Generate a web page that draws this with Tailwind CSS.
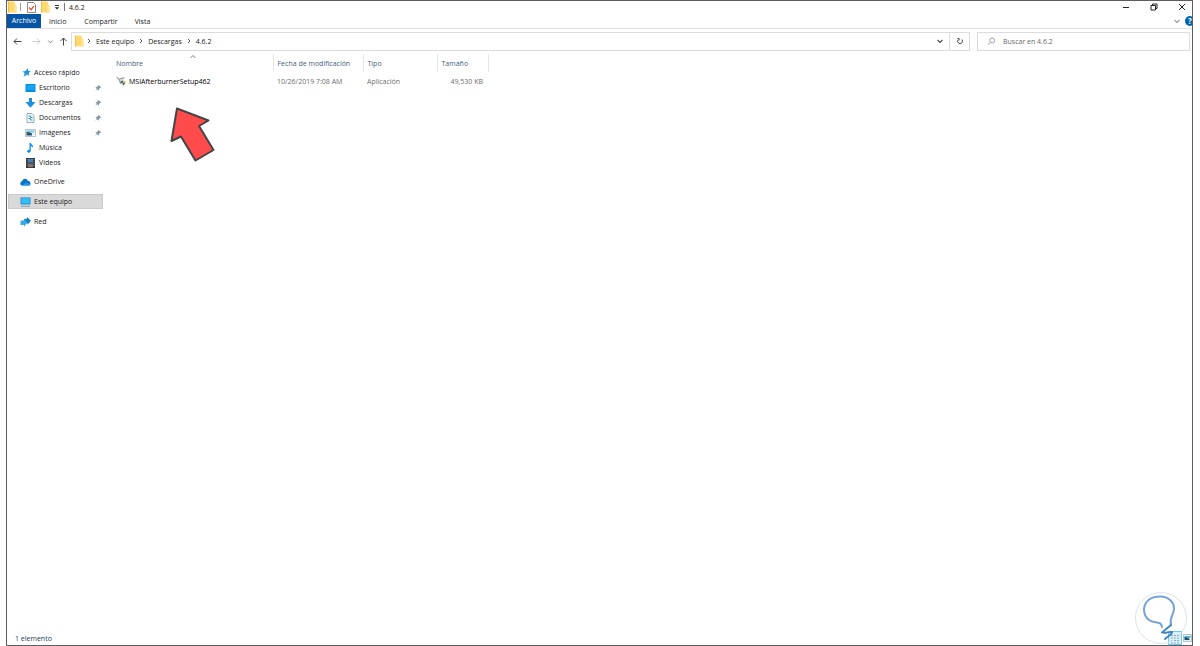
<!DOCTYPE html>
<html lang="es">
<head>
<meta charset="utf-8">
<title>4.6.2</title>
<script src="https://cdn.jsdelivr.net/npm/@tailwindcss/browser@4"></script>
</head>
<body class="bg-white">
<svg class="hidden" aria-hidden="true">
  <symbol id="folder" viewBox="0 0 10 12"><path d="M1 .5h6l1 1v2l1.500 1v7H1z" fill="#ffd96f"/><path d="M1 .5h1v11H1z" fill="#f2bd45"/><path d="M7 4.500h2.500v7H7z" fill="#ffe599"/></symbol>
  <symbol id="right" viewBox="0 0 6 6"><path d="M2 1l2 2-2 2" fill="none" stroke="#444" stroke-width=".9"/></symbol>
  <symbol id="down" viewBox="0 0 8 8"><path d="M1.500 3L4 5.500 6.500 3" fill="none" stroke="currentColor" stroke-width="1.100"/></symbol>
  <symbol id="pin" viewBox="0 0 8 8"><path d="M4.500.7L7.300 3.500l-1 .2L5 5l-.2 1.700L3.200 5.200.8 7.300 2.800 4.800 1.300 3.200 3 3l1.300-1.300z" fill="#8795a1"/></symbol>
</svg>
<div class="h-screen pl-[6px] pr-[7px]">
<div class="relative flex h-full flex-col overflow-hidden border border-[#5d5d61] bg-white font-['Open_Sans','Noto_Sans',sans-serif] text-[7px] leading-[15px] text-[#1a1a1a]">
  <header class="flex h-[13px] shrink-0 items-center pb-px">
    <svg class="h-3 w-[10px]"><use href="#folder"/></svg>
    <span class="ml-[3px] h-2 w-px bg-[#999]"></span>
    <button class="ml-[6px]" aria-label="Propiedades"><svg class="h-[11px] w-[9px]" viewBox="0 0 9 11"><path d="M.5.500h6l2 2v8h-8z" fill="#fff" stroke="#8b8b8b"/><path d="M2 5.500l2 2.300L7 4" fill="none" stroke="#e0522d" stroke-width="1.300"/></svg></button>
    <button class="ml-[4px]" aria-label="Nueva carpeta"><svg class="h-3 w-[10px]"><use href="#folder"/></svg></button>
    <button class="ml-[4px]" aria-label="Personalizar"><svg class="h-[6px] w-[6px]" viewBox="0 0 6 6"><path d="M1 1.500h4" stroke="#222" stroke-width=".9"/><path d="M.8 3.200h4.400L3 5.400z" fill="#222"/></svg></button>
    <span class="ml-[4px] h-2 w-px bg-[#777]"></span>
    <h1 class="ml-[4px] text-[7px]">4.6.2</h1>
    <div class="ml-auto mr-[6px] flex items-center gap-[20px]">
      <button aria-label="Minimizar"><svg class="h-2 w-2" viewBox="0 0 8 8"><path d="M1 4.500h6" stroke="#222"/></svg></button>
      <button aria-label="Restaurar"><svg class="h-2 w-2" viewBox="0 0 8 8"><path d="M1 2.500h4.500v4.500H1zM2.500 2.500V1H7v4.500H5.500" fill="none" stroke="#222"/></svg></button>
      <button aria-label="Cerrar"><svg class="h-2 w-2" viewBox="0 0 8 8"><path d="M1 1l6 6M7 1L1 7" stroke="#222"/></svg></button>
    </div>
  </header>
  <nav class="flex h-[15px] shrink-0 items-center border-b border-[#e2e2e2]">
    <button class="h-[14px] w-[34px] bg-[#0655a5] leading-[14px] text-white">Archivo</button>
    <button class="ml-[8px]">Inicio</button>
    <button class="ml-[18px]">Compartir</button>
    <button class="ml-[17px]">Vista</button>
    <button class="ml-auto text-[#999]" aria-label="Expandir cinta"><svg class="h-2 w-2"><use href="#down"/></svg></button>
    <button class="-mr-[3px] ml-[4px] h-[10px] w-[10px] shrink-0 rounded-full bg-[#0063b1] text-[8px] leading-[10px] font-bold text-white" aria-label="Ayuda">?</button>
  </nav>
  <div class="flex h-[24px] shrink-0 items-center pr-[2px]">
    <button class="ml-[6px]" aria-label="Atrás"><svg class="h-[9px] w-[9px]" viewBox="0 0 9 9"><path d="M8.500 4.500H1M4 1.500l-3 3 3 3" fill="none" stroke="#444"/></svg></button>
    <button class="ml-[10px]" aria-label="Adelante"><svg class="h-[9px] w-[9px]" viewBox="0 0 9 9"><path d="M.5 4.500H8M5 1.500l3 3-3 3" fill="none" stroke="#ccc"/></svg></button>
    <button class="ml-[6px] text-[#777]" aria-label="Recientes"><svg class="h-[7px] w-[7px]"><use href="#down"/></svg></button>
    <button class="ml-[5px]" aria-label="Subir"><svg class="h-[9px] w-[9px]" viewBox="0 0 9 9"><path d="M4.500 8.500V1M1.500 4l3-3 3 3" fill="none" stroke="#444"/></svg></button>
    <div class="ml-[3px] flex h-[19px] flex-1 items-center border border-[#dcdcdc] pl-[2px]">
      <svg class="h-3 w-[10px]"><use href="#folder"/></svg>
      <svg class="ml-[2px] h-[6px] w-[6px]"><use href="#right"/></svg>
      <a href="#" class="ml-[4px]">Este equipo</a>
      <svg class="ml-[4px] h-[6px] w-[6px]"><use href="#right"/></svg>
      <a href="#" class="ml-[4px]">Descargas</a>
      <svg class="ml-[4px] h-[6px] w-[6px]"><use href="#right"/></svg>
      <a href="#" class="ml-[4px]">4.6.2</a>
      <button class="ml-auto mr-[5px] text-[#444]" aria-label="Historial"><svg class="h-2 w-2"><use href="#down"/></svg></button>
      <button class="flex h-full w-[20px] items-center justify-center border-l border-[#dcdcdc]" aria-label="Actualizar"><svg class="h-2 w-2" viewBox="0 0 8 8"><path d="M5.800 2.500A2.400 2.400 0 1 1 2.300 2.600M1.500 1.500h1.600v1.800" fill="none" stroke="#444"/></svg></button>
    </div>
    <label class="ml-[7px] flex h-[19px] w-[213px] items-center border border-[#dcdcdc] pl-[9px]">
      <svg class="h-[9px] w-[9px]" viewBox="0 0 9 9"><circle cx="5.200" cy="3.500" r="2.500" fill="none" stroke="#888" stroke-width=".8"/><path d="M3.300 5.300L.8 8" stroke="#888" stroke-width=".8"/></svg>
      <input class="ml-[7px] min-w-0 flex-1 outline-none placeholder:text-[#6a6a6a]" placeholder="Buscar en 4.6.2" aria-label="Buscar en 4.6.2">
    </label>
  </div>
  <div class="flex min-h-0 flex-1">
    <aside class="w-[96px] shrink-0 pl-px pt-[12px] whitespace-nowrap">
      <a href="#" class="flex items-center gap-[3px] pl-[14px]"><svg class="h-[9px] w-[9px]" viewBox="0 0 9 9"><path d="M5.500.3l.8 2.400 2.500.6-2 1.600.3 2.900-2-1.200L1.500 8.700l1.200-3.500L.5 3.500l3.200-.6z" fill="#2196dd"/></svg>Acceso rápido</a>
      <a href="#" class="flex items-center gap-[3px] pl-[17px] pr-px"><svg class="h-[10px] w-[11px]" viewBox="0 0 11 10"><path d="M.5 1h10v8H.5z" fill="#0b8be0"/><path d="M1.500 2h8v5h-8z" fill="#13a4f5"/></svg>Escritorio<svg class="ml-auto h-2 w-2"><use href="#pin"/></svg></a>
      <a href="#" class="flex items-center gap-[3px] pl-[17px] pr-px"><svg class="h-[10px] w-[11px]" viewBox="0 0 11 10"><path d="M4 0h3v4h3.500l-5 5.800L.5 4H4z" fill="#1b90dc"/></svg>Descargas<svg class="ml-auto h-2 w-2"><use href="#pin"/></svg></a>
      <a href="#" class="flex items-center gap-[3px] pl-[17px] pr-px"><svg class="h-[10px] w-[11px]" viewBox="0 0 11 10"><path d="M2 .5h5l2 2v7H2z" fill="#f5f8fa" stroke="#92a4ae" stroke-width=".9"/><path d="M3.500 3h2v1.500h2M3.500 5.500h2V7h2" fill="none" stroke="#2d9bdc"/></svg>Documentos<svg class="ml-auto h-2 w-2"><use href="#pin"/></svg></a>
      <a href="#" class="flex items-center gap-[3px] pl-[17px] pr-px"><svg class="h-[10px] w-[11px]" viewBox="0 0 11 10"><path d="M.5 1.500h10v7H.5z" fill="#e8f4fb" stroke="#a9b8c0" stroke-width=".8"/><path d="M1.500 2.500h8v2h-8z" fill="#7cc9f2"/><path d="M1.500 4l3 .3 2.500 1.200v2H1.500z" fill="#31566b"/></svg>Imágenes<svg class="ml-auto h-2 w-2"><use href="#pin"/></svg></a>
      <a href="#" class="flex items-center gap-[3px] pl-[17px]"><svg class="h-[10px] w-[11px]" viewBox="0 0 11 10"><path d="M4.500 0h1.300c.3 1.500 2.800 2 2.300 5C7.600 3.800 6.800 3.300 5.800 3.200V8C5.600 10 2 10.300 2 8.300 2 7 3.500 6.500 4.500 6.800z" fill="#1692df"/></svg>Música</a>
      <a href="#" class="flex items-center gap-[3px] pl-[17px]"><svg class="h-[10px] w-[11px]" viewBox="0 0 11 10"><path d="M1 0h9v10H1z" fill="#33383f"/><path d="M3 .8h5v3.700H3z" fill="#4280b5"/><path d="M3 5.500h5v3.700H3z" fill="#6b7484"/><path d="M3 7.500l2-1.500 3 3H3z" fill="#9b7156"/><path d="M2 1v8M9 1v8" stroke="#999" stroke-width=".7" stroke-dasharray="1 1"/></svg>Vídeos</a>
      <a href="#" class="mt-[4px] flex items-center gap-[3px] pl-[12px]"><svg class="h-[8px] w-[11px]" viewBox="0 0 11 8"><path d="M2.500 7.500C-.5 7.500-.2 3.500 2 3.300 2.700.3 6.500-.1 7.800 2.700 10.500 2.500 12 7.500 8.500 7.500z" fill="#0a73c9"/><path d="M2 7.300L6.500 4.500l3.700 2.300c-.8.7-1.700.7-2 .7H2.500z" fill="#1c9ae6"/></svg>OneDrive</a>
      <a href="#" class="mt-[5px] flex items-center gap-[3px] bg-[#d9d9d9] pl-[12px] outline outline-1 -outline-offset-1 outline-[#cbcbcb]"><svg class="h-[10px] w-[11px]" viewBox="0 0 11 10"><path d="M.5.500h10v7H.5z" fill="#198fd4"/><path d="M1.300 1.300h8.400v5.200H1.300z" fill="#35bdf5"/><path d="M1 9.300h9" stroke="#7da2b5"/></svg>Este equipo</a>
      <a href="#" class="mt-[5px] flex items-center gap-[3px] pl-[12px]"><svg class="h-[10px] w-[11px]" viewBox="0 0 11 10"><path d="M4 2l3-.5V0l4 3.800-3.500 4V6.200L4 7z" fill="#1583c5"/><path d="M.5 3.800l3.500-.6V2l3.300 3.500L4 9.700V7.800l-3.500.4z" fill="#35a9e4"/></svg>Red</a>
    </aside>
    <main class="relative min-w-0 flex-1 pl-[9px] pt-px">
      <svg class="absolute left-[86px] top-[1px] h-[5px] w-[8px]" viewBox="0 0 8 5"><path d="M1.500 4L4 1.500 6.500 4" fill="none" stroke="#777" stroke-width=".9"/></svg>
      <table class="w-[376px] table-fixed border-collapse whitespace-nowrap text-[#6d6d6d]">
        <colgroup><col class="w-[161px]"><col class="w-[90px]"><col class="w-[74px]"><col class="w-[51px]"></colgroup>
        <thead class="text-left text-[#43617f]"><tr class="h-[18px]">
          <th class="border-r border-[#e5e5e5] p-0 pl-[4px] font-normal">Nombre</th>
          <th class="border-r border-[#e5e5e5] p-0 pl-[4px] font-normal">Fecha de modificación</th>
          <th class="border-r border-[#e5e5e5] p-0 pl-[4px] font-normal">Tipo</th>
          <th class="border-r border-[#e5e5e5] p-0 pl-[4px] font-normal">Tamaño</th>
        </tr></thead>
        <tbody><tr class="h-[18px]">
          <td class="p-0 pl-[4px]"><a href="#" class="flex items-center gap-[3px] text-black"><svg class="h-[10px] w-[10px]" viewBox="0 0 10 10"><path d="M.5 1l3 1.500L7 1.500l2 .5-2 2 1 2-3 1-3-3z" fill="#d3d6d8"/><path d="M.5 1l2.500 2 1.500 5M8.500 1.500L3.500 3" fill="none" stroke="#888" stroke-width=".8"/><path d="M4.500 5.500L7 4.500V7H4.500zM7 7h2.500L7 9.800z" fill="#2176c7"/><path d="M7 4.500l2.700 1V7H7zM4.500 7H7v2.800z" fill="#f0b52d"/></svg>MSIAfterburnerSetup462</a></td>
          <td class="p-0 pl-[4px]">10/26/2019 7:08 AM</td>
          <td class="p-0 pl-[4px]">Aplicación</td>
          <td class="p-0 pr-[5px] text-right">49,530 KB</td>
        </tr></tbody>
      </table>
      <svg class="absolute left-[65px] top-[51px] h-[60px] w-[50px]" viewBox="0 0 50 60"><path d="M7 6.500L2.500 37.500l9.500-4 14 23.500 5-2z" fill="#000" opacity=".08"/><path d="M9 4.500L3.500 37l9.500-4.500 14.500 24 18-10.500-14.500-24 9.500-5.500z" fill="#ff4b4b" stroke="#454545" stroke-width="2" stroke-linejoin="round"/></svg>
    </main>
  </div>
  <footer class="flex h-[14px] shrink-0 items-center pl-[8px] text-[#264160]">
    <span>1 elemento</span>
    <button class="ml-auto" aria-label="Detalles"><svg class="h-[14px] w-[14px]" viewBox="0 0 14 14"><path d="M.5.500h13v13H.5z" fill="#d9f0fb" stroke="#6cc9f2"/><path d="M3 4.500h8M3 7h8M3 9.500h8M3 12h8" stroke="#8299a6" stroke-width=".8" stroke-dasharray="2 1"/></svg></button>
    <button class="ml-[1px]" aria-label="Iconos grandes"><svg class="h-[8px] w-[9px]" viewBox="0 0 9 8"><path d="M.5.500h8v7h-8z" fill="#e3f1f9" stroke="#b5c5ce"/><path d="M1.500 2h6v2h-6z" fill="#57b9e8"/><path d="M1.500 3l3 .5 2 1.500v1h-5z" fill="#2b4d62"/></svg></button>
  </footer>
  <svg class="pointer-events-none absolute bottom-0 right-[4px] h-[54px] w-[54px]" viewBox="0 0 54 54" fill="none"><circle cx="27" cy="27" r="25.500" stroke="#d9e5f2" stroke-width="1"/><path d="M28 36C27 29 20 33 15 29 11 26 10 22 10 18 11 9 18 5.500 26 5.500c9 0 14 6 14 12C40 24 35 26 37 34" stroke="#74a4d6" stroke-width="2" stroke-linecap="round"/><path d="M37 34L28 41.500c3 1.500 7-1.500 10-.5 0 3-4 4-7 7" stroke="#3f86c6" stroke-width="1.900" stroke-linecap="round" stroke-linejoin="round"/></svg>
</div>
</div>
</body>
</html>
